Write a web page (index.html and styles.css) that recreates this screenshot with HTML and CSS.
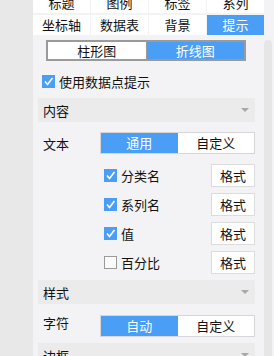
FILE: index.html
```html
<!DOCTYPE html>
<html lang="zh-CN">
<head>
  <meta charset="UTF-8">
  <meta name="viewport" content="width=device-width, initial-scale=1">
  <title>提示设置</title>
  <link rel="stylesheet" href="styles.css">
</head>
<body>
  <div class="frame">
    <!-- left strip -->
    <div class="side"></div>

    <!-- settings panel -->
    <div class="panel">
      <div class="tabs">
        <div class="tab">标题</div>
        <div class="tab">图例</div>
        <div class="tab">标签</div>
        <div class="tab">系列</div>
        <div class="tab">坐标轴</div>
        <div class="tab">数据表</div>
        <div class="tab">背景</div>
        <div class="tab active">提示</div>
      </div>

      <div class="chart-type">
        <div class="chart-btn">柱形图</div>
        <div class="chart-btn active">折线图</div>
      </div>

      <label class="check main-check">
        <span class="box on"></span>
        <span>使用数据点提示</span>
      </label>

      <div class="section">内容<span class="arrow"></span></div>

      <div class="row">
        <span class="row-label">文本</span>
        <div class="switch">
          <div class="switch-btn active">通用</div>
          <div class="switch-btn">自定义</div>
        </div>
      </div>

      <div class="items">
        <div class="item">
          <label class="check"><span class="box on"></span><span>分类名</span></label>
          <button class="fmt">格式</button>
        </div>
        <div class="item">
          <label class="check"><span class="box on"></span><span>系列名</span></label>
          <button class="fmt">格式</button>
        </div>
        <div class="item">
          <label class="check"><span class="box on"></span><span>值</span></label>
          <button class="fmt">格式</button>
        </div>
        <div class="item">
          <label class="check"><span class="box"></span><span>百分比</span></label>
          <button class="fmt">格式</button>
        </div>
      </div>

      <div class="section">样式<span class="arrow"></span></div>

      <div class="row row-top">
        <span class="row-label">字符</span>
        <div class="switch">
          <div class="switch-btn active">自动</div>
          <div class="switch-btn">自定义</div>
        </div>
      </div>

      <div class="section">边框<span class="arrow"></span></div>
    </div>

    <!-- scrollbar -->
    <div class="scroll">
      <div class="thumb"></div>
    </div>
  </div>
</body>
</html>
```

FILE: styles.css
```css
/* Chart tooltip settings panel */
body {
  margin: 0;
  font-family: "Noto Sans CJK SC", "Noto Sans", sans-serif;
  font-size: 12px;
  color: #111;
  background-color: #f3f3f5;
  overflow: hidden;
}
.frame {
  display: flex;
  height: 356px;
  overflow: hidden;
}
.side {
  width: 33px;
  flex-shrink: 0;
  background-color: #e8e8e8;
}
.panel {
  width: 231px;
  flex-shrink: 0;
  display: flex;
  flex-direction: column;
}
.scroll {
  width: 10px;
  flex-shrink: 0;
}
.thumb {
  width: 8px;
  height: 400px;
  margin-top: 40px;
  background-color: #e6e6e6;
  border-radius: 4px 4px 0 0;
}

/* tab grid, scrolled a little */
.tabs {
  display: grid;
  grid-template-columns: repeat(4, 1fr);
  column-gap: 1px;
  row-gap: 2px;
  margin-top: -7px;
}
.tab {
  height: 20px;
  line-height: 20px;
  text-align: center;
  background: #fff;
  font-size: 13px;
}
.tab.active {
  background-color: #4a9ef6;
  color: #fff;
}

/* bar / line switch */
.chart-type {
  display: flex;
  width: 200px;
  height: 21px;
  margin: 5px 0 0 13px;
  box-sizing: border-box;
  border: 2px solid #9a9a9a;
}
.chart-btn {
  flex: 1;
  text-align: center;
  line-height: 17px;
  font-size: 13px;
  background: #fff;
}
.chart-btn:first-child {
  border-right: 1px solid #9a9a9a;
}
.chart-btn.active {
  background-color: #4a9ef6;
  color: #fff;
}

/* checkboxes */
.check {
  display: flex;
  align-items: center;
  gap: 4px;
  font-size: 13px;
}
.box {
  width: 13px;
  height: 13px;
  box-sizing: border-box;
  border: 1px solid #9a9a9a;
  background: #fafafa;
}
.box.on {
  border: none;
  background: #4a9ef6 url("data:image/svg+xml,%3Csvg xmlns='http://www.w3.org/2000/svg' width='13' height='13'%3E%3Cpath d='M3 6.5l2.5 3L10.5 3' fill='none' stroke='%23fff' stroke-width='1.6'/%3E%3C/svg%3E") no-repeat center;
}
.main-check {
  margin: 14px 0 0 9px;
  height: 12px;
}

/* collapsible section headers */
.section {
  display: flex;
  align-items: center;
  justify-content: space-between;
  height: 24px;
  margin: 0 9px 0 5px;
  padding: 0 6px 0 5px;
  background-color: #ebebeb;
  font-size: 13px;
  flex-shrink: 0;
}
.main-check + .section {
  margin-top: 11px;
}
.arrow {
  width: 0;
  height: 0;
  border-left: 4px solid transparent;
  border-right: 4px solid transparent;
  border-top: 4px solid #a8a8a8;
}

/* label + two way switch */
.row {
  display: flex;
  align-items: center;
  justify-content: space-between;
  margin: 10px 9px 0 10px;
}
.row-top {
  align-items: flex-start;
  margin-top: 11px;
  margin-bottom: 6px;
}
.row-label {
  font-size: 13px;
}
.row-top .row-label {
  line-height: 16px;
}
.switch {
  display: flex;
  width: 155px;
  height: 22px;
  box-sizing: border-box;
  border: 1px solid #d6d6d8;
  background: #fff;
}
.switch-btn {
  flex: 1;
  text-align: center;
  line-height: 20px;
  font-size: 13px;
}
.switch-btn.active {
  background-color: #4a9ef6;
  color: #fff;
}

/* format rows */
.items {
  display: flex;
  flex-direction: column;
  gap: 6px;
  margin: 10px 9px 6px 71px;
}
.item {
  display: flex;
  align-items: center;
  justify-content: space-between;
  height: 23px;
}
.fmt {
  width: 44px;
  height: 23px;
  padding: 0;
  border: 1px solid #dcdcdc;
  background: #fff;
  font-family: inherit;
  font-size: 13px;
  color: #111;
}
```
